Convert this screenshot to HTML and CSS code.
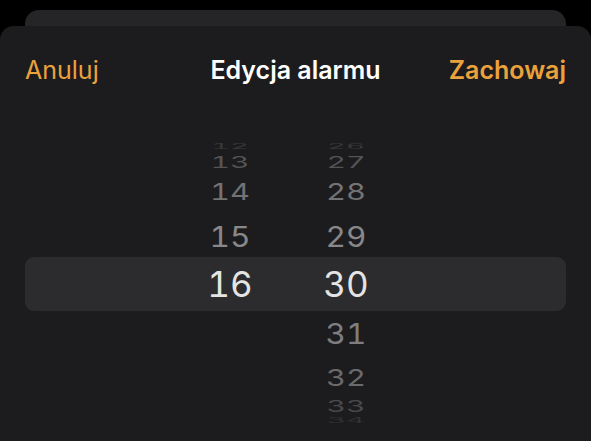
FILE: index.html
```html
<!DOCTYPE html>
<html lang="pl">
<head>
  <meta charset="UTF-8" />
  <title>Edycja alarmu</title>
  <link rel="stylesheet" href="styles.css">
</head>
<body>
  <div class="sheet-behind"></div>

  <div class="sheet">
    <div class="sheet-header">
      <button class="nav-button">Anuluj</button>
      <h1 class="sheet-title">Edycja alarmu</h1>
      <button class="nav-button nav-button-strong">Zachowaj</button>
    </div>

    <!-- Time wheel: hours on the left, minutes on the right -->
    <div class="time-picker">
      <div class="wheel-row far-4"><span class="cell">12</span><span class="cell">26</span></div>
      <div class="wheel-row far-3"><span class="cell">13</span><span class="cell">27</span></div>
      <div class="wheel-row far-2"><span class="cell">14</span><span class="cell">28</span></div>
      <div class="wheel-row far-1"><span class="cell">15</span><span class="cell">29</span></div>
      <div class="wheel-row selected"><span class="cell">16</span><span class="cell">30</span></div>
      <div class="wheel-row near-1"><span class="cell"></span><span class="cell">31</span></div>
      <div class="wheel-row near-2"><span class="cell"></span><span class="cell">32</span></div>
      <div class="wheel-row near-3"><span class="cell"></span><span class="cell">33</span></div>
      <div class="wheel-row near-4"><span class="cell"></span><span class="cell">34</span></div>
    </div>
  </div>
</body>
</html>
```

FILE: styles.css
```css
* {
  margin: 0;
  padding: 0;
  box-sizing: border-box;
}

body {
  font-family: Inter, "Noto Sans", sans-serif;
  width: 591px;
  height: 441px;
  background: #000;
  color: #fff;
  overflow: hidden;
  display: flex;
  flex-direction: column;
}

/* Card peeking out behind the sheet */
.sheet-behind {
  margin: 10px 25px 0;
  height: 30px;
  flex-shrink: 0;
  background: #252527;
  border-radius: 14px 14px 0 0;
}

.sheet {
  flex: 1;
  margin-top: -14px;
  position: relative;
  background: #1c1c1e;
  border-radius: 14px 14px 0 0;
}

/* Header */
.sheet-header {
  display: grid;
  grid-template-columns: 1fr auto 1fr;
  align-items: center;
  padding: 29px 25px 0;
  height: 59px;
}

.nav-button {
  justify-self: start;
  background: transparent;
  border: none;
  font-family: inherit;
  font-size: 25px;
  font-weight: 400;
  line-height: 30px;
  color: #eca23c;
}

.nav-button-strong {
  justify-self: end;
  font-weight: 600;
}

.sheet-title {
  font-size: 25px;
  font-weight: 600;
  line-height: 30px;
  color: #fff;
}

/* Picker */
.time-picker {
  margin-top: 50px;
  display: flex;
  flex-direction: column;
}

.wheel-row {
  display: flex;
  align-items: center;
  gap: 36px;
  padding-left: 190px;
  font-size: 35px;
  font-weight: 400;
  font-variant-numeric: tabular-nums;
  line-height: 1;
}

.cell {
  width: 80px;
  text-align: center;
  display: block;
}

.wheel-row.selected {
  height: 54px;
  margin: 0 25px;
  padding-left: 165px;
  background: #2c2c2e;
  border-radius: 9px;
  color: #e4e4e4;
}

.far-1 { height: 42px; color: #88888a; }
.far-2 { height: 48px; color: #737376; }
.far-3 { height: 10px; color: #545457; }
.far-4 { height: 22px; color: #37373a; }

.near-1 { height: 44px; color: #7e7e81; }
.near-2 { height: 44px; color: #6a6a6d; }
.near-3 { height: 14px; color: #4a4a4d; }
.near-4 { height: 14px; color: #313134; }

/* Rows bend away on the drum */
.far-1 .cell, .near-1 .cell { transform: scale(0.9, 0.82); }
.far-2 .cell, .near-2 .cell { transform: scale(0.88, 0.67); }
.far-3 .cell, .near-3 .cell { transform: scale(0.86, 0.46); }
.far-4 .cell, .near-4 .cell { transform: scale(0.84, 0.2); }
```
